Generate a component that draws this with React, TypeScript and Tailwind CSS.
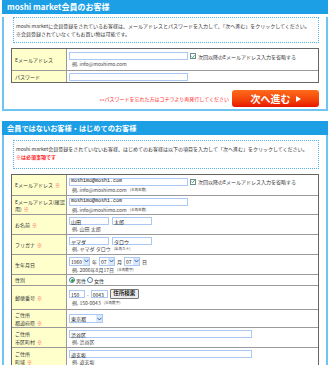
import type {ReactNode} from "react";

const jp = "font-['Noto_Sans_CJK_JP','Noto_Sans',sans-serif]";
const mono = "font-['Liberation_Mono',monospace]";

function Req() {
  return <span className="ml-[2px] text-[#ff4a4a]">※</span>;
}

function Input({className, children, isMono}: {className: string; children?: ReactNode; isMono?: boolean}) {
  return (
    <span
      className={`inline-flex h-[8px] shrink-0 items-center border border-[#a9c9f2] bg-white px-[1px] text-[5px] leading-none text-[#222] ${
        isMono ? mono + " text-[5.6px]" : ""
      } ${className}`}
    >
      {children}
    </span>
  );
}

function Select({className, children}: {className: string; children: ReactNode}) {
  return (
    <span
      className={`inline-flex h-[9px] shrink-0 items-center justify-between border border-[#a9c9f2] bg-white pl-[1px] text-[5px] leading-none text-[#222] ${className}`}
    >
      <span>{children}</span>
      <span className="flex h-full w-[6px] items-center justify-center bg-[#dbe8fa]">
        <svg width="5" height="4" viewBox="0 0 5 4">
          <path d="M0.5 0.8 L2.5 3 L4.5 0.8" fill="none" stroke="#3a64b4" strokeWidth="1" />
        </svg>
      </span>
    </span>
  );
}

function Check() {
  return (
    <span className="inline-flex h-[6px] w-[6px] shrink-0 items-center justify-center border border-[#6c8c9c] bg-white">
      <svg width="5" height="5" viewBox="0 0 5 5">
        <path d="M0.6 2.5 L2 4 L4.5 0.8" fill="none" stroke="#2aa12a" strokeWidth="1" />
      </svg>
    </span>
  );
}

function Radio({on}: {on?: boolean}) {
  return (
    <span className="inline-flex h-[6px] w-[6px] shrink-0 items-center justify-center rounded-full border border-[#4f7ea8] bg-white">
      {on && <span className="h-[3px] w-[3px] rounded-full bg-[#2aa12a]" />}
    </span>
  );
}

function Example({children, note}: {children: ReactNode; note?: string}) {
  return (
    <div className="flex items-center pl-[3px] text-[5px] leading-[6px] text-[#444]">
      <span>{children}</span>
      {note && <span className="ml-[3px] text-[3.6px]">{note}</span>}
    </div>
  );
}

function Row({label, h, children, last}: {label: ReactNode; h: string; children?: ReactNode; last?: boolean}) {
  return (
    <div className={`flex ${h} ${last ? "" : "border-b border-[#9a9a9a]"}`}>
      <div className="flex w-[55px] shrink-0 items-center border-r border-[#9a9a9a] bg-[#ffffcc] pl-[3px] pr-[1px] text-[5px] leading-[7.5px] text-[#333]">
        <div>{label}</div>
      </div>
      <div className="flex flex-1 flex-col justify-center gap-[1px] pl-[2px]">{children}</div>
    </div>
  );
}

function Header({children, size}: {children: ReactNode; size: string}) {
  return (
    <div className={`mx-[2px] flex h-[14px] items-center bg-[#1d9fe6] pl-[5px] font-bold text-white ${size}`}>
      {children}
    </div>
  );
}

export default function App() {
  return (
    <div className={`h-[365px] w-[330px] overflow-hidden bg-white ${jp}`}>
      <Header size="text-[8px]">moshi market会員のお客様</Header>
      <div className="mx-[2px] border-x-2 border-b-2 border-[#70c4f2] pb-[2px]">
        <div className="ml-[9px] mr-[7px] mt-[3px] h-[26px] border border-dotted border-[#5ab4ec] px-[2px] pt-[4px] text-[5px] leading-[8px] text-[#333]">
          <div>moshi marketに会員登録をされているお客様は、メールアドレスとパスワードを入力して、「次へ進む」をクリックしてください。</div>
          <div>※会員登録されていなくてもお買い物は可能です。</div>
        </div>
        <div className="mx-[7px] mt-[5px] border border-[#666]">
          <Row label="Eメールアドレス" h="h-[22px]">
            <div className="flex items-center gap-[2px]">
              <Input className="w-[119px]" />
              <Check />
              <span className="text-[5px] leading-none text-[#333]">次回以降のEメールアドレス入力を省略する</span>
            </div>
            <Example>例. info@moshimo.com</Example>
          </Row>
          <Row label="パスワード" h="h-[11px]" last>
            <Input className="w-[119px]" />
          </Row>
        </div>
        <div className="mr-[7px] mt-[7px] flex items-center justify-end gap-[3px]">
          <span className="text-[5px] text-[#ff2a2a]">»»パスワードを忘れた方はコチラより再発行してください</span>
          <button className="flex h-[17px] w-[87px] items-center justify-center gap-[5px] rounded-[3px] bg-gradient-to-b from-[#ff6a1a] to-[#e81000] text-[10px] font-bold text-white">
            <span>次へ進む</span>
            <svg width="5" height="6" viewBox="0 0 5 6">
              <path d="M0 0 L5 3 L0 6 Z" fill="white" />
            </svg>
          </button>
        </div>
      </div>

      <div className="mt-[10px]">
        <Header size="text-[7.2px]">会員ではないお客様・はじめてのお客様</Header>
      </div>
      <div className="mx-[2px] border-x-2 border-[#70c4f2] pt-[1px]">
        <div className="ml-[9px] mr-[7px] mt-[4px] h-[29px] border border-dotted border-[#5ab4ec] px-[2px] pt-[4px] text-[5px] leading-[8px] text-[#333]">
          <div>moshi market会員登録をされていないお客様、はじめてのお客様は以下の項目を入力して「次へ進む」をクリックしてください。</div>
          <div className="font-bold text-[#ff2020]">※は必須事項です</div>
        </div>
        <div className="mx-[7px] mt-[5px] border border-b-0 border-[#666]">
          <Row label={<>Eメールアドレス<Req /></>} h="h-[21px]">
            <div className="flex items-center gap-[2px]">
              <Input className="w-[119px]" isMono>moshimo@moshi.com</Input>
              <Check />
              <span className="text-[5px] leading-none text-[#333]">次回以降のEメールアドレス入力を省略する</span>
            </div>
            <Example note="(半角英数)">例. info@moshimo.com</Example>
          </Row>
          <Row label={<><div>Eメールアドレス(確認</div><div>用)<Req /></div></>} h="h-[19px]">
            <Input className="w-[119px]" isMono>moshimo@moshi.com</Input>
            <Example note="(半角英数)">例. info@moshimo.com</Example>
          </Row>
          <Row label={<>お名前<Req /></>} h="h-[20px]">
            <div className="flex items-center gap-[3px]">
              <Input className="w-[40px]">山田</Input>
              <Input className="w-[40px]">太郎</Input>
            </div>
            <Example>例. 山田 太郎</Example>
          </Row>
          <Row label={<>フリガナ<Req /></>} h="h-[20px]">
            <div className="flex items-center gap-[3px]">
              <Input className="w-[40px]">ヤマダ</Input>
              <Input className="w-[40px]">タロウ</Input>
            </div>
            <Example note="(全角カナ)">例. ヤマダ タロウ</Example>
          </Row>
          <Row label="生年月日" h="h-[20px]">
            <div className="flex items-center gap-[2px] text-[5px] leading-none text-[#333]">
              <Select className="w-[21px]">1960</Select>
              <span>年</span>
              <Select className="w-[16px]">07</Select>
              <span>月</span>
              <Select className="w-[16px]">07</Select>
              <span>日</span>
            </div>
            <Example note="(半角数字)">例. 2006年8月17日</Example>
          </Row>
          <Row label="性別" h="h-[11px]">
            <div className="flex items-center gap-[1px] text-[5px] leading-none text-[#333]">
              <Radio on />
              <span>男性</span>
              <Radio />
              <span>女性</span>
            </div>
          </Row>
          <Row label={<>郵便番号<Req /></>} h="h-[24px]">
            <div className="flex items-center gap-[2px] text-[5px] leading-none text-[#333]">
              <Input className="w-[16px]">150</Input>
              <span>-</span>
              <Input className="w-[17px]">0043</Input>
              <span className="flex h-[10px] w-[29px] items-center justify-center rounded-[1px] border border-[#777] bg-[#eeeeee] text-[5.5px] font-bold text-[#222]">
                住所検索
              </span>
            </div>
            <Example note="(半角数字)">例. 150-0043</Example>
          </Row>
          <Row label={<><div>ご住所</div><div>都道府県<Req /></div></>} h="h-[18px]">
            <Select className="w-[34px]">東京都</Select>
          </Row>
          <Row label={<><div>ご住所</div><div>市区町村<Req /></div></>} h="h-[20px]">
            <Input className="w-[183px]">渋谷区</Input>
            <Example>例. 渋谷区</Example>
          </Row>
          <Row label={<><div>ご住所</div><div>町域<Req /></div></>} h="h-[20px]">
            <Input className="w-[183px]">道玄坂</Input>
            <Example>例. 道玄坂</Example>
          </Row>
        </div>
      </div>
    </div>
  );
}
